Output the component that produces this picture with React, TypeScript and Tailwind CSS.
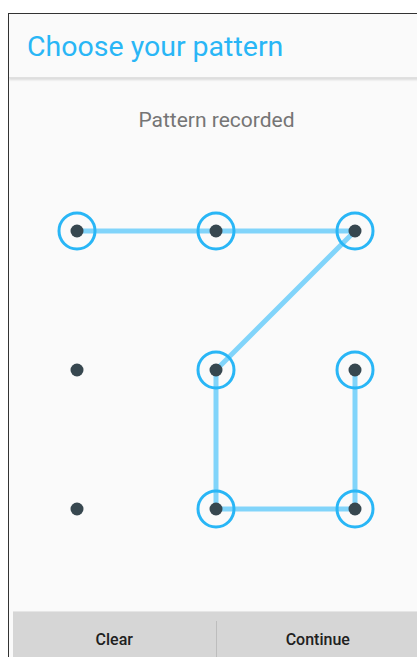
const dots = [
  [77, 230], [216, 230], [355, 230],
  [77, 369], [216, 369], [355, 369],
  [77, 508], [216, 508], [355, 508],
];

// indices of dots in the recorded path
const path = [0, 1, 2, 4, 7, 8, 5];

const PatternGrid = () => {
  const pts = path.map((i) => dots[i]);
  return (
    <svg width="423" height="420" viewBox="0 160 423 420" className="block -ml-[9px]">
      <polyline
        points={pts.map((p) => p.join(",")).join(" ")}
        fill="none"
        stroke="#81d4fa"
        strokeWidth="5"
        strokeLinejoin="miter"
      />
      {path.map((i) => (
        <circle key={"c" + i} cx={dots[i][0]} cy={dots[i][1]} r="18" fill="none" stroke="#29b6f6" strokeWidth="3" />
      ))}
      {dots.map(([x, y], i) => (
        <circle key={i} cx={x} cy={y} r="6.5" fill="#37474f" />
      ))}
    </svg>
  );
};

export default function App() {
  return (
    <div className="w-[417px] h-[657px] overflow-hidden bg-white pl-[8px] pt-[13px]" style={{ fontFamily: "Roboto, 'Noto Sans', sans-serif" }}>
      <div className="w-[420px] h-[700px] border-l border-t border-[#333] bg-[#fafafa] flex flex-col">
        <header className="h-[64px] flex items-center pl-[18px] pt-[4px] shadow-[0_2px_2px_rgba(0,0,0,0.12)] border-b border-[#e0e0e0]">
          <h1 className="text-[28.5px] text-[#29b6f6] leading-none">Choose your pattern</h1>
        </header>
        <p className="mt-[32px] h-[21px] text-center text-[21px] text-[#757575] leading-none -ml-[4px]">Pattern recorded</p>
        <div className="mt-[29.5px]">
          <PatternGrid />
        </div>
        <div className="mt-[30px] ml-[4px] w-[406px] h-[50px] bg-[#d6d6d6] flex border-t border-[#e6e6e6]">
          <button className="flex-1 flex items-center justify-center text-[16px] font-medium text-[#212121] pt-[8px]">Clear</button>
          <div className="w-px bg-[#bdbdbd] mt-[9px]" />
          <button className="flex-1 flex items-center justify-center text-[16px] font-medium text-[#212121] pt-[8px]">Continue</button>
        </div>
      </div>
    </div>
  );
}
